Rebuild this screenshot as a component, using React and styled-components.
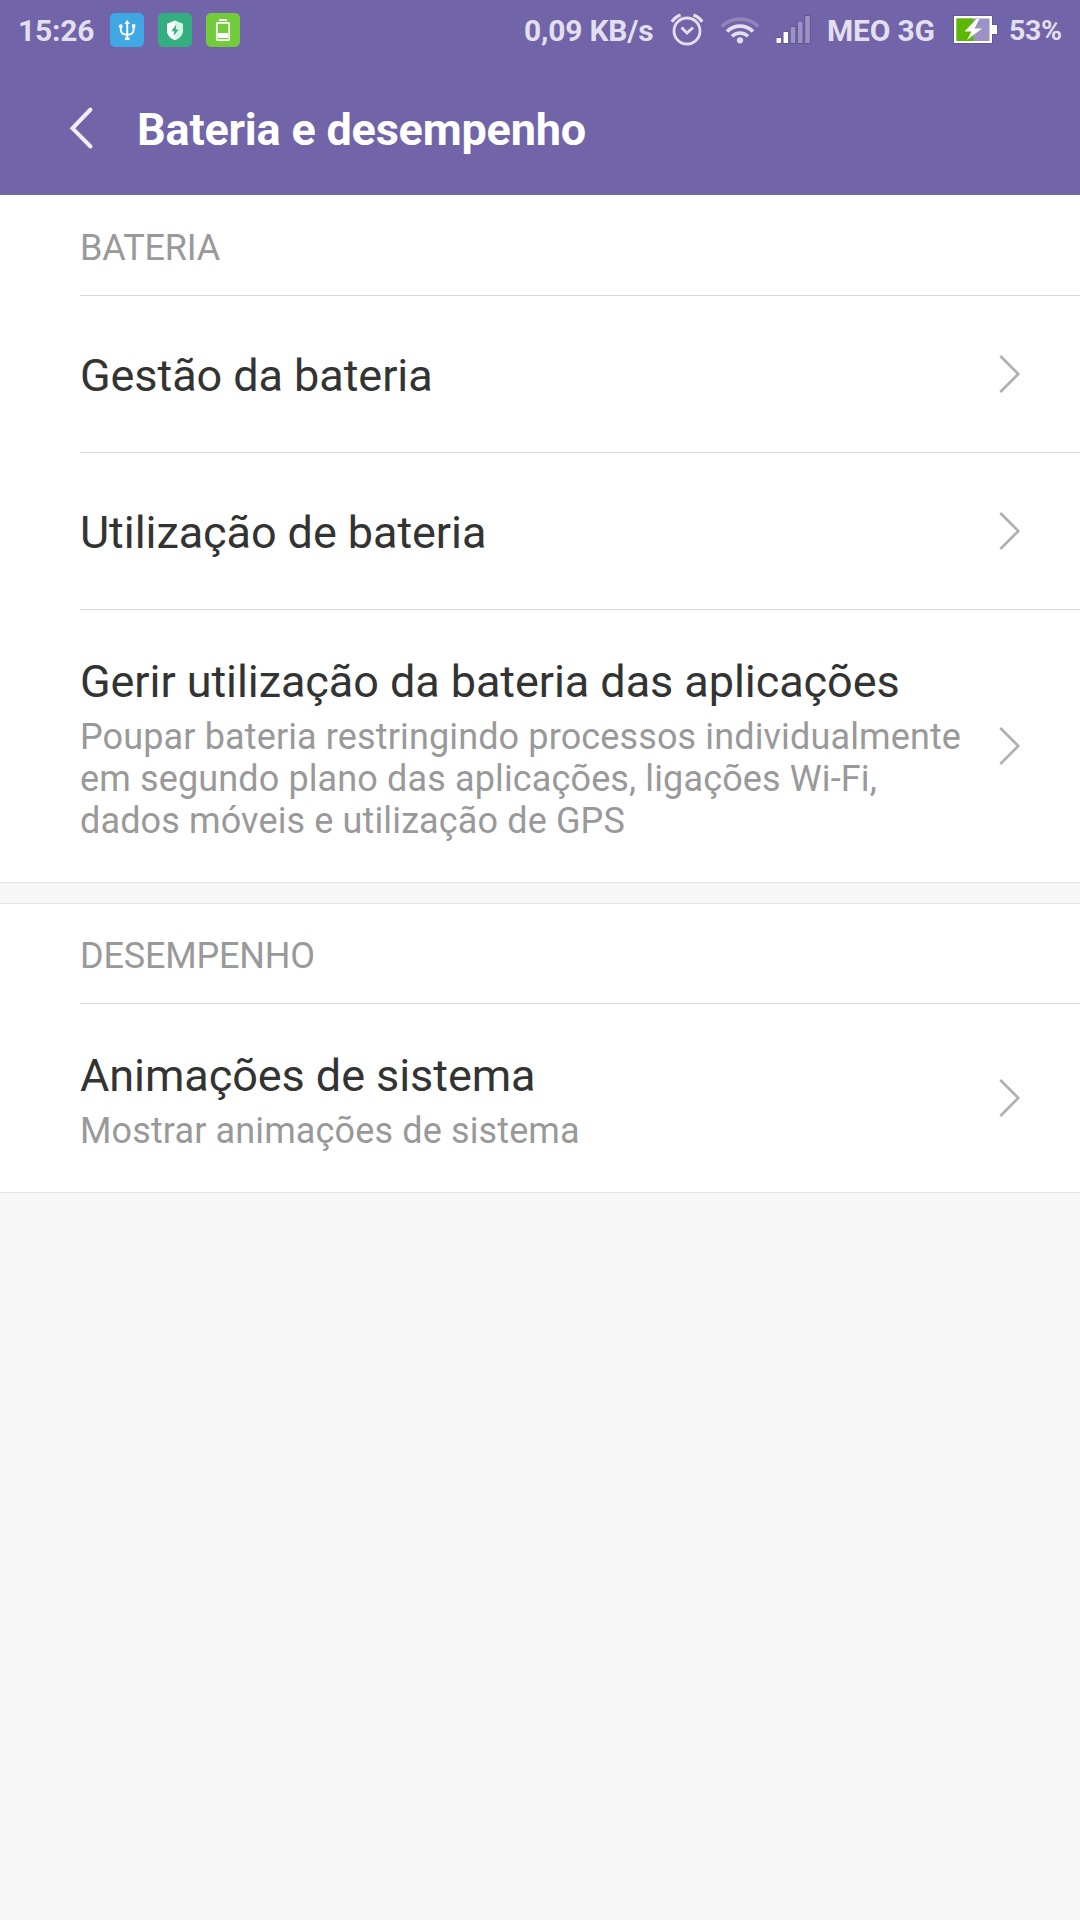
import React from "react";
import styled, { createGlobalStyle } from "styled-components";

const GlobalStyle = createGlobalStyle`
  * {
    box-sizing: border-box;
  }

  body {
    margin: 0;
    background-color: #f7f7f7;
    font-family: Roboto, "Noto Sans", sans-serif;
  }
`;

const Page = styled.div`
  min-height: 1920px;
  background-color: #f7f7f7;
`;

const Header = styled.header`
  height: 195px;
  background-color: #7164a8;
`;

const StatusBar = styled.div`
  display: flex;
  justify-content: space-between;
  align-items: center;
  height: 60px;
  padding: 0 18px 0 18px;
`;

const StatusGroup = styled.div`
  display: flex;
  align-items: center;
`;

const StatusText = styled.span`
  width: ${(props) => props.$width}px;
  margin-top: 2px;
  margin-right: ${(props) => props.$gap || 0}px;
  font-size: ${(props) => props.$size || 30}px;
  font-weight: 700;
  line-height: 36px;
  letter-spacing: ${(props) => props.$spacing || 0}px;
  white-space: nowrap;
  color: #e2dfee;
`;

const StatusIcon = styled.svg`
  display: block;
  flex: none;
  margin-right: ${(props) => props.$gap}px;
`;

const AppTile = styled.div`
  width: 34px;
  height: 34px;
  margin-right: 14px;
  border-radius: 5px;
  background-color: ${(props) => props.$color};

  svg {
    display: block;
  }
`;

const TitleBar = styled.div`
  display: flex;
  align-items: center;
  height: 135px;
  padding: 0 0 0 67px;
`;

const BackButton = styled.button`
  width: 70px;
  height: 44px;
  padding: 0;
  border: none;
  background: none;

  svg {
    display: block;
  }
`;

const Title = styled.h1`
  margin: 3px 0 0;
  font-size: 45px;
  font-weight: 700;
  line-height: 53px;
  letter-spacing: -0.2px;
  color: #ffffff;
`;

const Section = styled.section`
  margin-bottom: 20px;
  background-color: #ffffff;
  border-top: ${(props) => (props.$first ? "none" : "1px solid #e2e2e2")};
  border-bottom: 1px solid #e2e2e2;
`;

const SectionTitle = styled.h2`
  height: ${(props) => (props.$first ? 100 : 99)}px;
  margin: 0;
  padding: ${(props) => (props.$first ? 32 : 31)}px 0 0 80px;
  font-size: 36px;
  font-weight: 400;
  line-height: 42px;
  letter-spacing: -0.18px;
  color: #999999;
`;

const Row = styled.div`
  display: flex;
  align-items: center;
  min-height: 157px;
  margin-left: 80px;
  padding-right: 58px;
  border-top: 1px solid #d8d8d8;
`;

const RowBody = styled.div`
  flex: 1;
  padding: ${(props) => (props.$tall ? "45px 0 40px" : "3px 0 0")};
`;

const RowTitle = styled.div`
  font-size: 45px;
  line-height: 53px;
  letter-spacing: -0.07px;
  white-space: nowrap;
  color: #333333;
`;

const RowSummary = styled.div`
  max-width: 890px;
  margin-top: 8px;
  font-size: 36px;
  line-height: 42px;
  letter-spacing: 0.13px;
  color: #999999;
`;

const Arrow = styled.svg`
  display: block;
  flex: none;
  margin-bottom: 1px;
`;

const sections = [
  {
    title: "BATERIA",
    rows: [
      { title: "Gestão da bateria" },
      { title: "Utilização de bateria" },
      {
        title: "Gerir utilização da bateria das aplicações",
        summary:
          "Poupar bateria restringindo processos individualmente em segundo plano das aplicações, ligações Wi-Fi, dados móveis e utilização de GPS",
      },
    ],
  },
  {
    title: "DESEMPENHO",
    rows: [
      { title: "Animações de sistema", summary: "Mostrar animações de sistema" },
    ],
  },
];

function UsbTile() {
  return (
    <AppTile $color="#3fa7e1">
      <svg width="34" height="34" fill="none" stroke="#fff" strokeWidth="1.9">
        <path d="M17.2 9v17M10.8 13v3.5c0 3.5 2.5 5.3 6.4 5.3s6.4-1.8 6.4-5.3V13" />
        <path d="M17.2 7l2.8 4h-5.6z" fill="#fff" stroke="none" />
        <circle cx="10.8" cy="13.2" r="1.9" fill="#fff" stroke="none" />
        <path d="M22 11.3h3.3v3.4H22zM15 24.5h4.5V27H15z" fill="#fff" stroke="none" />
      </svg>
    </AppTile>
  );
}

function ShieldTile() {
  return (
    <AppTile $color="#34ad80">
      <svg width="34" height="34">
        <path d="M17 7.5l8 3.2v7.3c0 4-3 7-8 9.3z" fill="#d2f7e8" />
        <path d="M17 7.5l-8 3.2v7.3c0 4 3 7 8 9.3z" fill="#fff" />
        <path d="M18.3 11.5l-5 6.8h3l-.7 4.7 5-6.6h-3z" fill="#34ad80" />
      </svg>
    </AppTile>
  );
}

function BatteryTile() {
  return (
    <AppTile $color="#72cb3b">
      <svg width="34" height="34">
        <path d="M13 6h8v2h-8zM12 20h10v5H12z" fill="#fff" />
        <rect x="10.8" y="9.8" width="12.4" height="17.4" rx="1" fill="none" stroke="#fff" strokeWidth="1.7" />
      </svg>
    </AppTile>
  );
}

function AlarmIcon() {
  return (
    <StatusIcon $gap={16} width="34" height="34" fill="none" stroke="#e2dfee">
      <circle cx="17" cy="18" r="13" strokeWidth="2.8" />
      <path d="M11.5 14.5l5.5 5.5 6-5.5" strokeWidth="2.8" />
      <path d="M2 8.8Q4.8 4 10.6 2M32 8.8Q29.2 4 23.4 2" strokeWidth="3.4" />
    </StatusIcon>
  );
}

function WifiIcon() {
  return (
    <StatusIcon $gap={15} width="40" height="34" fill="none" stroke="#e2dfee" strokeWidth="3.6">
      <path d="M2 13.5a25.5 25.5 0 0 1 36 0" opacity=".28" />
      <path d="M7 18.5a18.4 18.4 0 0 1 26 0M12 23.3a11.3 11.3 0 0 1 16 0" />
      <circle cx="20" cy="27.3" r="3.1" fill="#e2dfee" stroke="none" />
    </StatusIcon>
  );
}

const bars = [
  { x: 1.5, height: 5, on: true },
  { x: 8.5, height: 11, on: true },
  { x: 15.7, height: 16, on: false },
  { x: 22.9, height: 21.5, on: false },
  { x: 30.2, height: 27, on: false },
];

function SignalIcon() {
  return (
    <StatusIcon $gap={14} width="38" height="34">
      {bars.map((bar) => (
        <rect
          key={bar.x}
          x={bar.x}
          y={30 - bar.height}
          width="4.6"
          height={bar.height}
          fill={bar.on ? "#fff" : "#9c92c4"}
          stroke="#5f5492"
          strokeWidth="1.6"
          paintOrder="stroke"
        />
      ))}
    </StatusIcon>
  );
}

function ChargingIcon() {
  return (
    <StatusIcon $gap={11} width="46" height="34">
      <path
        d="M2 3h38v9h5v9h-5v9H2z"
        fill="#fff"
        stroke="#5f5492"
        strokeWidth="1.6"
        paintOrder="stroke"
      />
      <path d="M4.5 5.500h33v22.500h-33z" fill="#9c92c4" />
      <path d="M4.5 5.500h17v22.500h-17z" fill="#5bb800" />
      <path d="M24.5 6L12.500 18.500h7l-4.500 8.500L30 15.500h-7.500l5-9.500z" fill="#fff" />
    </StatusIcon>
  );
}

function SettingsRow({ row }) {
  return (
    <Row>
      <RowBody $tall={Boolean(row.summary)}>
        <RowTitle>{row.title}</RowTitle>
        {row.summary && <RowSummary>{row.summary}</RowSummary>}
      </RowBody>
      <Arrow width="24" height="40" fill="none" stroke="#b0b0b0" strokeWidth="2.6">
        <path d="M2.3 2l18 18-18 18" />
      </Arrow>
    </Row>
  );
}

export default function App() {
  return (
    <Page>
      <GlobalStyle />
      <Header>
        <StatusBar>
          <StatusGroup>
            <StatusText $width={92} $spacing={-0.2}>
              15:26
            </StatusText>
            <UsbTile />
            <ShieldTile />
            <BatteryTile />
          </StatusGroup>
          <StatusGroup>
            <StatusText $width={130} $gap={16} $spacing={-0.2}>
              0,09 KB/s
            </StatusText>
            <AlarmIcon />
            <WifiIcon />
            <SignalIcon />
            <StatusText $width={109} $gap={16} $spacing={-0.2}>
              MEO 3G
            </StatusText>
            <ChargingIcon />
            <StatusText $width={53} $size={28.5} $spacing={-0.4}>
              53%
            </StatusText>
          </StatusGroup>
        </StatusBar>
        <TitleBar>
          <BackButton aria-label="Voltar">
            <svg width="28" height="44" fill="none" stroke="#f1eff7" strokeWidth="4">
              <path d="M23.5 3.500L5.500 22.300l18 18.200" strokeLinecap="round" />
            </svg>
          </BackButton>
          <Title>Bateria e desempenho</Title>
        </TitleBar>
      </Header>
      {sections.map((section, index) => (
        <Section key={section.title} $first={index === 0}>
          <SectionTitle $first={index === 0}>{section.title}</SectionTitle>
          {section.rows.map((row) => (
            <SettingsRow key={row.title} row={row} />
          ))}
        </Section>
      ))}
    </Page>
  );
}
